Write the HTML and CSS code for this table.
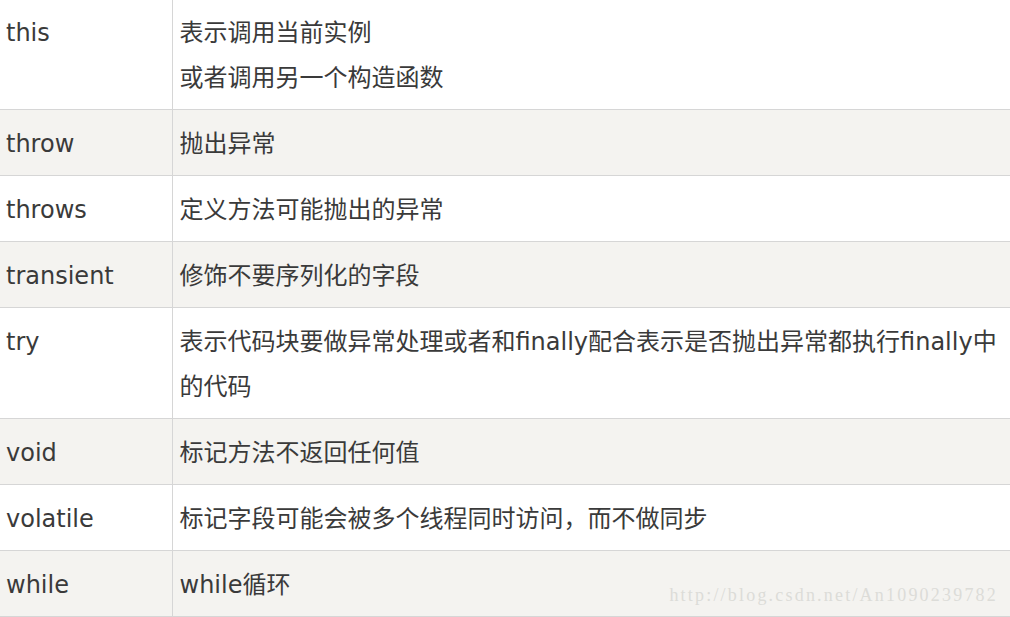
FILE: index.html
```html
<!DOCTYPE html>
<html lang="zh">
<head>
<meta charset="utf-8">
<link rel="stylesheet" href="styles.css">
</head>
<body>
<div class="page">
<table class="kw">
<colgroup><col class="c1"><col class="c2"></colgroup>
<tr class="first"><td>this</td><td>表示调用当前实例<br>或者调用另一个构造函数</td></tr>
<tr class="alt"><td>throw</td><td>抛出异常</td></tr>
<tr><td>throws</td><td>定义方法可能抛出的异常</td></tr>
<tr class="alt"><td>transient</td><td>修饰不要序列化的字段</td></tr>
<tr><td>try</td><td>表示代码块要做异常处理或者和finally配合表示是否抛出异常都执行finally中的代码</td></tr>
<tr class="alt"><td>void</td><td>标记方法不返回任何值</td></tr>
<tr><td>volatile</td><td>标记字段可能会被多个线程同时访问，而不做同步</td></tr>
<tr class="alt"><td>while</td><td>while循环</td></tr>
</table>
<div class="wm">http://blog.csdn.net/An1090239782</div>
</div>
</body>
</html>
```
FILE: styles.css
```css
html, body { margin: 0; padding: 0; background: #fff; }
.page { position: relative; width: 1010px; height: 617px; overflow: hidden; }
.kw {
  border-collapse: collapse;
  width: 1010px;
  margin-top: -1px;
  font-family: "DejaVu Sans", "Noto Sans CJK SC", sans-serif;
  font-size: 24px;
  color: #3a3a3a;
}
.c1 { width: 172px; }
.kw td {
  vertical-align: top;
  line-height: 45px;
  padding: 12px 6px 8px 6px;
  border-top: 1px solid #d6d6d6;
  border-bottom: 1px solid #d6d6d6;
}
.kw tr.first td { padding-top: 11px; padding-bottom: 8px; }
.kw td:first-child { border-right: 1px solid #d6d6d6; }
.kw td + td { padding-left: 7px; padding-right: 4px; }
.kw tr.alt td { background: #f4f3f0; }
.wm {
  position: absolute;
  right: 12px;
  bottom: 11px;
  font-family: "Liberation Serif", "DejaVu Serif", serif;
  font-size: 18px;
  letter-spacing: 2.2px;
  color: #dcdcd8;
}
```
